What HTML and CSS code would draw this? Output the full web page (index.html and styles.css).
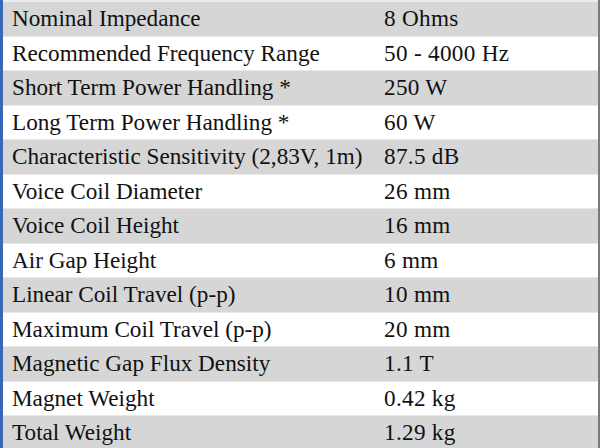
FILE: index.html
```
<!DOCTYPE html>
<html>
<head>
<meta charset="UTF-8">
<title>Specifications</title>
<link rel="stylesheet" href="styles.css">
</head>
<body>

   <div class="specs">
      <div class="row odd"><div class="cell name">Nominal Impedance</div><div class="cell value">8 Ohms</div></div>
      <div class="row"><div class="cell name">Recommended Frequency Range</div><div class="cell value">50 - 4000 Hz</div></div>
      <div class="row odd"><div class="cell name">Short Term Power Handling *</div><div class="cell value">250 W</div></div>
      <div class="row"><div class="cell name">Long Term Power Handling *</div><div class="cell value">60 W</div></div>
      <div class="row odd"><div class="cell name">Characteristic Sensitivity (2,83V, 1m)</div><div class="cell value">87.5 dB</div></div>
      <div class="row"><div class="cell name">Voice Coil Diameter</div><div class="cell value">26 mm</div></div>
      <div class="row odd"><div class="cell name">Voice Coil Height</div><div class="cell value">16 mm</div></div>
      <div class="row"><div class="cell name">Air Gap Height</div><div class="cell value">6 mm</div></div>
      <div class="row odd"><div class="cell name">Linear Coil Travel (p-p)</div><div class="cell value">10 mm</div></div>
      <div class="row"><div class="cell name">Maximum Coil Travel (p-p)</div><div class="cell value">20 mm</div></div>
      <div class="row odd"><div class="cell name">Magnetic Gap Flux Density</div><div class="cell value">1.1 T</div></div>
      <div class="row"><div class="cell name">Magnet Weight</div><div class="cell value">0.42 kg</div></div>
      <div class="row odd"><div class="cell name">Total Weight</div><div class="cell value">1.29 kg</div></div>
   </div>

</body>
</html>
```

FILE: styles.css
```
body {
   margin: 0;
   background: #fff;
}

.specs {
   box-sizing: border-box;
   width: 600px;
   height: 448px;
   padding-top: 2px;
   background: #ececec;
   border-left: 3px solid #3a68b8;
   border-right: 2px solid #7a7a7a;
   font-family: "Liberation Serif", serif;
   font-size: 23.2px;
   color: #111;
   overflow: hidden;
}

.row {
   display: flex;
   height: 33.5px;
   align-items: center;
   background: #fff;
   border-bottom: 1px solid #e8e8e8;
}

.row.odd {
   background: #d6d6d6;
}

.cell {
   white-space: nowrap;
}

.name {
   width: 372px;
   padding-left: 9px;
   box-sizing: border-box;
}

.value {
   padding-left: 9px;
   letter-spacing: 0.3px;
}
```
